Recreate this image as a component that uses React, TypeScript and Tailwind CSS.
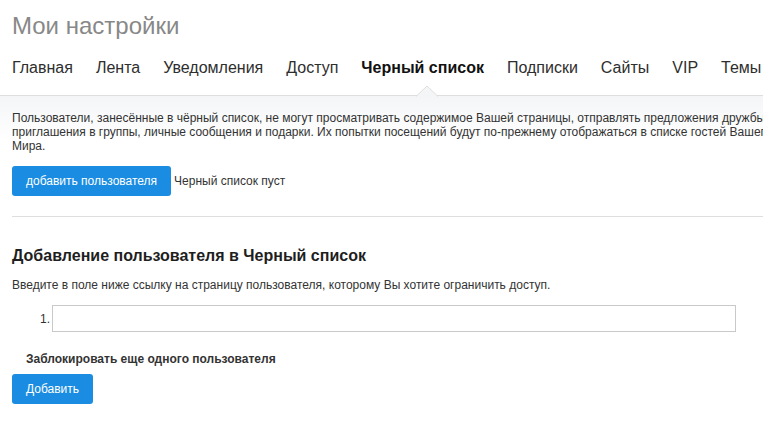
import React from 'react';

const tabs = ['Главная', 'Лента', 'Уведомления', 'Доступ', 'Черный список', 'Подписки', 'Сайты', 'VIP', 'Темы'];

const App: React.FC = () => {
  return (
    <div className="w-full h-[421px] overflow-hidden bg-white text-[#333] font-['Liberation_Sans',Arial,sans-serif]">
      {/* Header */}
      <div className="px-3 pt-[12px]">
        <h1 className="text-[24px] leading-[28px] text-[#888] font-normal whitespace-nowrap">Мои настройки</h1>
      </div>

      {/* Tabs */}
      <div className="relative border-b border-[#dedede] mt-[18px] pb-[17px]">
        <div className="flex gap-[23px] px-3 whitespace-nowrap text-[16px] leading-[20px]">
          {tabs.map(t => (
            <span
              key={t}
              className={t === 'Черный список' ? 'relative font-bold text-[#111]' : 'text-[#2e2e2e]'}
            >
              {t}
              {t === 'Черный список' && (
                <svg
                  className="absolute left-1/2 -translate-x-1/2 top-[27px] ml-[4px]"
                  width="22"
                  height="12"
                  viewBox="0 0 22 12"
                >
                  <path d="M0 11.5 L11 1 L22 11.5 Z" fill="#f4f5f7" />
                  <path d="M0 11.5 L11 1 L22 11.5" fill="none" stroke="#dedede" strokeWidth="1" />
                </svg>
              )}
            </span>
          ))}
        </div>
      </div>

      {/* Blacklist panel */}
      <div className="bg-[linear-gradient(to_bottom,#f4f5f7,#ffffff_45px)] pt-[15px]">
        <div className="px-3 text-[12px] leading-[14px] whitespace-nowrap">
          <p>
            Пользователи, занесённые в чёрный список, не могут просматривать содержимое Вашей страницы, отправлять предложения дружбы,
            <br />
            приглашения в группы, личные сообщения и подарки. Их попытки посещений будут по-прежнему отображаться в списке гостей Вашего
            <br />
            Мира.
          </p>
          <div className="flex items-center mt-[13px]">
            <button className="h-[30px] px-[14px] rounded-[3px] bg-[#1a8de2] text-white text-[12px]">
              добавить пользователя
            </button>
            <span className="ml-[3px] text-[12px]">Черный список пуст</span>
          </div>
        </div>
        <div className="ml-3 mt-[20px] border-t border-[#dedede]" />
      </div>

      {/* Add form */}
      <div className="px-3">
        <h2 className="mt-[29px] text-[16px] leading-[20px] font-bold text-[#1e1e1e] whitespace-nowrap">
          Добавление пользователя в Черный список
        </h2>
        <p className="mt-[12px] text-[12px] leading-[14px] whitespace-nowrap">
          Введите в поле ниже ссылку на страницу пользователя, которому Вы хотите ограничить доступ.
        </p>
        <div className="flex items-center mt-[13px] pl-[28px]">
          <span className="text-[12px] leading-[14px] w-[10px] text-right">1.</span>
          <input
            type="text"
            className="ml-[2px] w-[684px] h-[27px] border border-[#c9c9c9] bg-white outline-none px-2 text-[12px]"
          />
        </div>
        <div className="mt-[20px] pl-[14px] text-[12px] leading-[14px] font-bold text-[#333] whitespace-nowrap">
          Заблокировать еще одного пользователя
        </div>
        <button className="mt-[8px] h-[30px] px-[14px] rounded-[3px] bg-[#1a8de2] text-white text-[12px]">
          Добавить
        </button>
      </div>
    </div>
  );
};

export default App;
